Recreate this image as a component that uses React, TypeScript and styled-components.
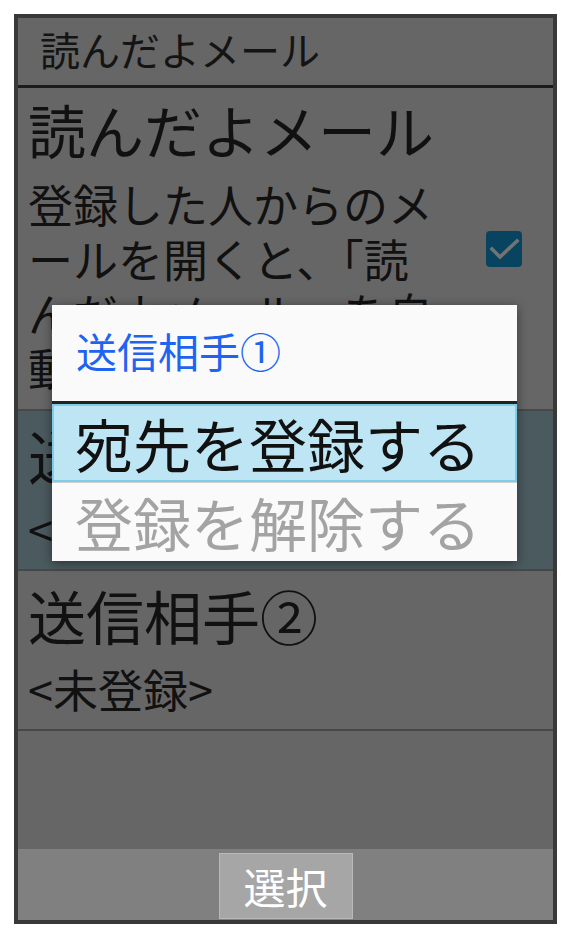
import styled, { createGlobalStyle } from 'styled-components';

const GlobalStyle = createGlobalStyle`
  html, body {
    margin: 0;
    padding: 0;
    background: #ffffff;
  }
  body {
    font-family: "Noto Sans CJK JP", "Noto Sans", sans-serif;
  }
`;

export default function App(): JSX.Element {
  return (
    <>
      <GlobalStyle />
      <Frame>
        <Header>読んだよメール</Header>

        <SettingRow>
          <SettingText>
            <Title>読んだよメール</Title>
            <Description>
              登録した人からのメールを開くと、「読んだよメール」を自動で送信します。
            </Description>
          </SettingText>
          <CheckBox>
            <svg width="36" height="36" viewBox="0 0 36 36">
              <path
                d="M6 18 L14 26 L31 10"
                fill="none"
                stroke="#737373"
                strokeWidth="3.6"
                strokeLinecap="square"
              />
            </svg>
          </CheckBox>
        </SettingRow>

        <ContactRow $active>
          <Title>送信相手①</Title>
          <Sub>&lt;未登録&gt;</Sub>
        </ContactRow>
        <ContactRow>
          <Title>送信相手②</Title>
          <Sub>&lt;未登録&gt;</Sub>
        </ContactRow>

        <Spacer />

        <BottomBar>
          <SoftKey>選択</SoftKey>
        </BottomBar>

        <Dialog>
          <DialogTitle>送信相手①</DialogTitle>
          <MenuItem $selected>宛先を登録する</MenuItem>
          <MenuItem $disabled>登録を解除する</MenuItem>
        </Dialog>
      </Frame>
    </>
  );
}

const Frame = styled.div`
  position: relative;
  box-sizing: border-box;
  margin: 14px 0 0 14px;
  width: 543px;
  height: 910px;
  border: 4px solid #393939;
  background-color: #666666;
  display: flex;
  flex-direction: column;
  overflow: hidden;
  color: #111111;
`;

const Header = styled.div`
  box-sizing: border-box;
  height: 70px;
  flex-shrink: 0;
  padding: 0 0 6px 22px;
  display: flex;
  align-items: center;
  font-size: 40px;
  line-height: 1;
  color: #141414;
  border-bottom: 3px solid #1c1c1c;
`;

const SettingRow = styled.div`
  box-sizing: border-box;
  height: 323px;
  flex-shrink: 0;
  padding: 0 31px 0 10px;
  display: flex;
  align-items: center;
  border-bottom: 2px solid #484848;
  overflow: hidden;
`;

const SettingText = styled.div`
  align-self: flex-start;
  padding-top: 12px;
  width: 412px;
  display: flex;
  flex-direction: column;
  gap: 19px;
`;

const Title = styled.div`
  font-size: 58px;
  line-height: 58px;
  white-space: nowrap;
`;

const Description = styled.div`
  font-size: 45px;
  line-height: 54.5px;
`;

const CheckBox = styled.div`
  margin-left: auto;
  width: 36px;
  height: 36px;
  border-radius: 4px;
  background-color: #08445f;
  display: flex;

  svg {
    display: block;
  }
`;

const ContactRow = styled.div<{ $active?: boolean }>`
  box-sizing: border-box;
  height: 160px;
  flex-shrink: 0;
  padding: 15px 0 0 10px;
  display: flex;
  flex-direction: column;
  gap: 18px;
  background-color: ${(p) => (p.$active ? '#4b5a5f' : 'transparent')};
  border-bottom: 2px solid #474747;
`;

const Sub = styled.div`
  font-size: 45px;
  line-height: 54.5px;
`;

const Spacer = styled.div`
  flex: 1;
`;

const BottomBar = styled.div`
  box-sizing: border-box;
  height: 71px;
  flex-shrink: 0;
  padding-top: 4px;
  background-color: #808080;
  display: flex;
  justify-content: center;
  align-items: flex-start;
`;

const SoftKey = styled.div`
  box-sizing: border-box;
  width: 134px;
  height: 66px;
  background-color: #a6a6a6;
  border: 1px solid #b9b9b9;
  color: #ffffff;
  font-size: 42px;
  line-height: 1;
  display: flex;
  align-items: center;
  justify-content: center;
`;

const Dialog = styled.div`
  position: absolute;
  left: 34px;
  top: 287px;
  width: 465px;
  background-color: #fafafa;
  box-shadow: 0 2px 10px rgba(0, 0, 0, 0.45);
  display: flex;
  flex-direction: column;
`;

const DialogTitle = styled.div`
  box-sizing: border-box;
  height: 99px;
  padding: 0 0 6px 24px;
  display: flex;
  align-items: center;
  font-size: 41px;
  line-height: 1;
  color: #1e64f0;
  border-bottom: 3px solid #222222;
`;

const MenuItem = styled.div<{ $selected?: boolean; $disabled?: boolean }>`
  box-sizing: border-box;
  height: ${(p) => (p.$selected ? '78px' : '79px')};
  padding-left: ${(p) => (p.$selected ? '21px' : '23px')};
  display: flex;
  align-items: center;
  font-size: 58px;
  line-height: 1;
  white-space: nowrap;
  color: ${(p) => (p.$disabled ? '#a3a3a3' : '#111111')};
  background-color: ${(p) => (p.$selected ? '#bde5f3' : 'transparent')};
  border: ${(p) => (p.$selected ? '2px solid #80cdea' : 'none')};
  border-top: ${(p) => (p.$disabled ? '1px solid #cfcfcf' : undefined)};
`;
